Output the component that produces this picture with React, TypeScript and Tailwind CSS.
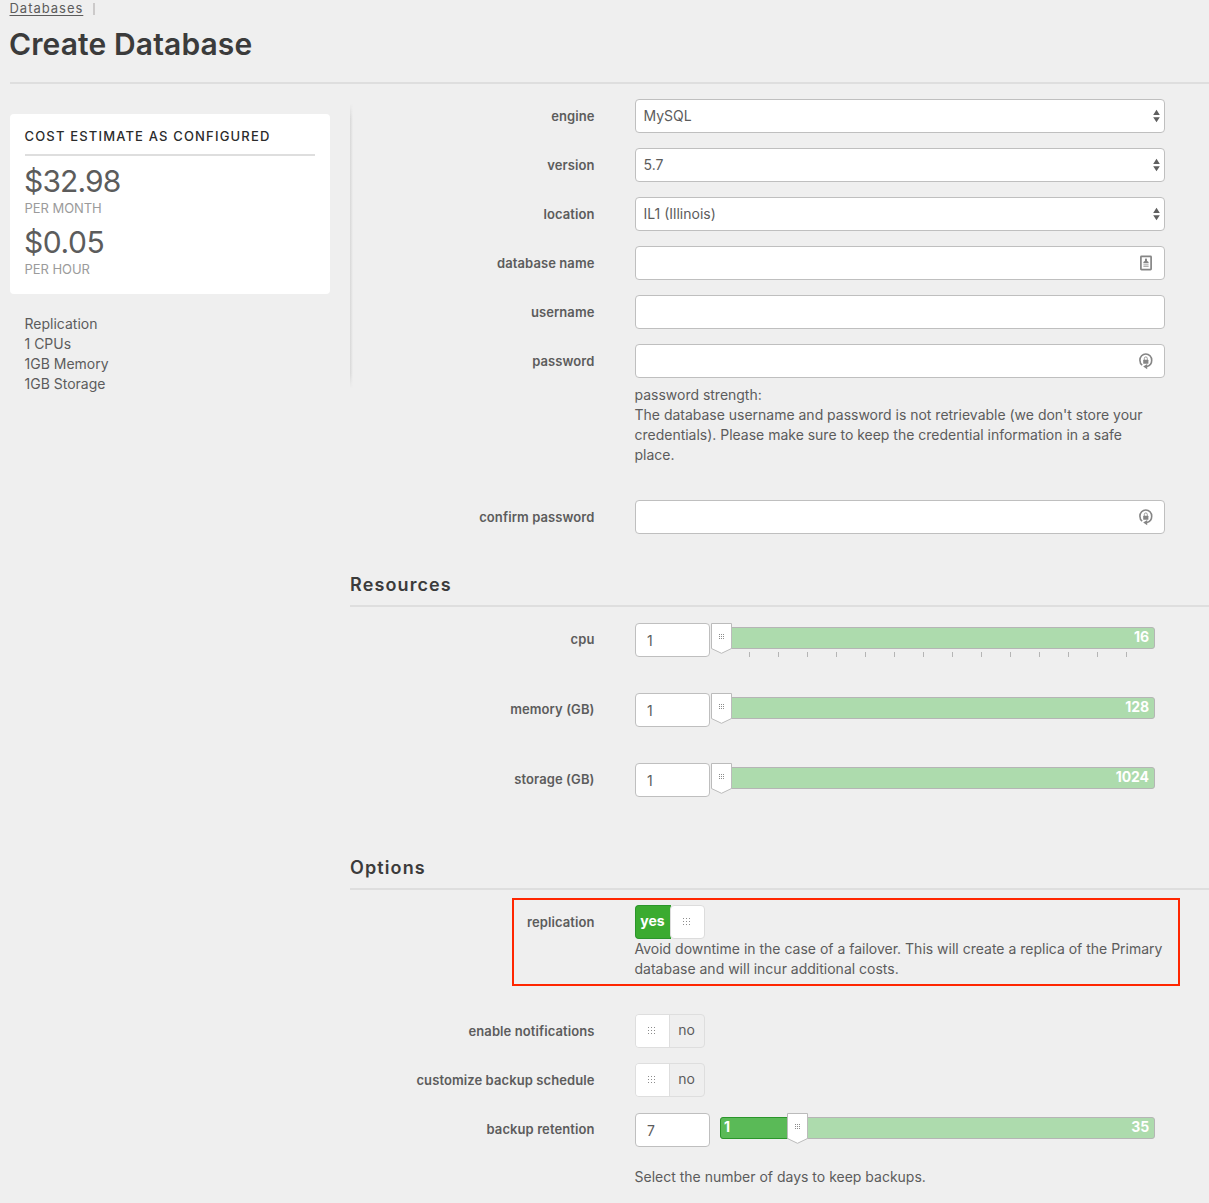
import type { ReactNode } from "react";

function Row({
  label, children, className = "", raised = false,
}: { label: string; children: ReactNode; className?: string; raised?: boolean }) {
  return (
    <div className={`flex items-start ${className}`}>
      <label
        className={`mr-[40.5px] w-[244.5px] text-right text-[13px] font-semibold tracking-[0.09px] ${raised ? "leading-[32px]" : "leading-[34px]"}`}
      >
        {label}
      </label>
      <div className="w-[530px]">{children}</div>
    </div>
  );
}

const fieldClass =
  "flex h-[34px] w-full items-center rounded-[4px] border border-[#bfbfbf] bg-white";

function SelectField({ value }: { value: string }) {
  return (
    <div className={`${fieldClass} justify-between pr-[4px] pl-[7.5px]`}>
      <span>{value}</span>
      <svg width="7" height="14" viewBox="0 0 7 14" fill="#5f5f5f">
        <path d="M3.5 .8 6.8 6H.2zM3.5 13.2 6.8 8.2H.2z" />
      </svg>
    </div>
  );
}

function TextField({ icon }: { icon?: ReactNode }) {
  return <div className={`${fieldClass} justify-end pr-[11px]`}>{icon}</div>;
}

function ContactIcon() {
  return (
    <svg width="14" height="16" viewBox="0 0 14 16" fill="none">
      <rect x="1.9" y="1.4" width="10.2" height="13.2" rx=".6" stroke="#858585" strokeWidth="1.7" />
      <path d="M7 3.5c.8 0 1.1.7 1 1.4-.1.6 0 1 .5 1.3.9.4 1.2.9 1.2 2.1H4.3c0-1.2.3-1.7 1.2-2.1.5-.3.6-.7.5-1.3-.1-.7.2-1.4 1-1.4z" fill="#858585" />
      <path d="M4.4 9.9h5.2M4.4 11.5h5.2" stroke="#b0b0b0" strokeWidth="1.2" />
    </svg>
  );
}

function GeneratePasswordIcon() {
  return (
    <svg width="14" height="18" viewBox="0 0 14 18" fill="none">
      <path d="M3.2 13.1C1.6 12 .9 10.3 .9 8.2.9 4.7 3.5 2 6.8 2s5.9 2.7 5.9 6.2c0 3-1.9 5.4-4.7 6.2" stroke="#858585" strokeWidth="1.6" />
      <path d="M4.2 14.6 8.2 12v5.2z" fill="#858585" />
      <rect x="4.2" y="7.7" width="5.2" height="4" rx=".5" fill="#858585" />
      <path d="M5.3 8V6.5a1.5 1.6 0 0 1 3 0V8" stroke="#9a9a9a" strokeWidth="1" />
    </svg>
  );
}

function Grip({ gap = 2 }: { gap?: number }) {
  const size = gap * 2 + 1;
  return (
    <svg width={size} height={size} viewBox={`0 0 ${size} ${size}`} fill="#8c8c8c" shapeRendering="crispEdges">
      {[0, 1, 2].flatMap((r) =>
        [0, 1, 2].map((c) => <rect key={`${r}${c}`} x={c * gap} y={r * gap} width="1" height="1" />)
      )}
    </svg>
  );
}

function Slider({
  value, max, min, offset = 0, ticks = 0,
}: { value: string; max: string; min?: string; offset?: number; ticks?: number }) {
  return (
    <div className="flex">
      <div className="flex h-[34px] w-[75px] items-center rounded-[4px] border border-[#bfbfbf] bg-white pt-[2px] pl-[11px]">
        {value}
      </div>
      <div className="relative mt-1 ml-[10px] h-[30px] w-[435px]">
        <div className="flex h-[22px] items-center justify-end rounded-[3px] border border-[#b5b5b5] bg-[#addbad] pr-[5px] pb-[2px] font-bold tracking-[-0.1px] text-white">
          {max}
        </div>
        {min && (
          <div
            className="absolute top-0 left-0 flex h-[22px] items-center rounded-l-[3px] border border-[#2b952b] bg-[#5aba57] pb-[2px] pl-[3px] font-bold text-white"
            style={{ width: offset + 2 }}
          >
            {min}
          </div>
        )}
        {ticks > 0 && (
          <div className="mt-[3px] flex h-[5px] justify-between pr-[28px] pl-[29px]">
            {Array.from({ length: ticks }, (_, i) => (
              <span key={i} className="w-px bg-[#b5b5b5]" />
            ))}
          </div>
        )}
        <div className="absolute -top-1 h-[31px] w-[21px]" style={{ left: offset - 9 }}>
          <svg width="21" height="31" viewBox="0 0 21 31">
            <path d="M.5 .5h20v25l-10 4.8L.5 25.5z" fill="#fff" stroke="#bbb" />
          </svg>
          <span className="absolute top-[11px] left-[8px] flex">
            <Grip />
          </span>
        </div>
      </div>
    </div>
  );
}

function Toggle({ on }: { on?: boolean }) {
  if (on) {
    return (
      <div className="flex h-[34px] w-[70px]">
        <div className="flex w-[36px] items-center justify-center rounded-l-[4px] border border-r-0 border-[#2b952b] bg-[#3bab30] pr-[2px] pb-[2px] font-bold text-white">
          yes
        </div>
        <div className="-ml-px flex w-[35px] items-center justify-center rounded-[4px] border border-[#dcdcdc] bg-white pr-[2px] pb-px">
          <Grip gap={3} />
        </div>
      </div>
    );
  }
  return (
    <div className="flex h-[34px] w-[70px] rounded-[4px] border border-[#dedede]">
      <div className="flex w-[34px] items-center justify-center rounded-l-[3px] border-r border-[#dedede] bg-white pr-[2px] pb-px">
        <Grip gap={3} />
      </div>
      <div className="flex flex-1 items-center justify-center pr-px pb-[2px]">no</div>
    </div>
  );
}

function SectionTitle({ children }: { children: ReactNode }) {
  return (
    <h2 className="h-[34px] border-b-2 border-[#dedede] text-[18px] leading-[24px] font-semibold tracking-[1.12px] text-[#3b3b3b]">
      {children}
    </h2>
  );
}

export default function App() {
  return (
    <div className="h-[1203px] w-[1209px] overflow-hidden bg-[#efefef] pl-[10px] font-['Inter',sans-serif] text-[14px] leading-5 text-[#5c5c5c]">
      <header className="h-[84px] border-b-2 border-[#dedede]">
        <nav className="-ml-[0.5px] flex h-[16px] items-center text-[13px] leading-[16px] tracking-[0.98px]">
          <a className="underline underline-offset-2">Databases</a>
          <span className="ml-[10px] h-[12px] w-[2px] translate-y-px bg-[#cccaca]" />
        </nav>
        <h1 className="mt-[10px] -ml-px text-[30px] leading-[36px] font-semibold tracking-[0.12px] text-[#3b3b3b]">Create Database</h1>
      </header>

      <div className="flex">
        <aside className="mt-[30px] w-[320px]">
          <div className="h-[180px] rounded-[4px] bg-white px-[15px] pt-[12px]">
            <h3 className="h-[30px] border-b-2 border-[#dedede] text-[13px] leading-[20px] font-medium tracking-[1.17px] whitespace-nowrap text-[#2b2b2b]">
              <span className="-ml-[0.5px]">COST ESTIMATE AS CONFIGURED</span>
            </h3>
            <p className="mt-[5px] -ml-px text-[30px] leading-[40px] tracking-[-0.85px]">$32.98</p>
            <p className="-mt-[3px] -ml-[0.5px] text-[13px] leading-[20px] tracking-[-0.05px] text-[#9b9b9b]">PER MONTH</p>
            <p className="mt-[4px] -ml-px text-[30px] leading-[40px] tracking-[-0.45px]">$0.05</p>
            <p className="-mt-[3px] -ml-[0.5px] text-[13px] leading-[20px] tracking-[-0.05px] text-[#9b9b9b]">PER HOUR</p>
          </div>
          <ul className="mt-[20px] pl-[14.5px]">
            <li>Replication</li>
            <li>1 CPUs</li>
            <li>1GB Memory</li>
            <li>1GB Storage</li>
          </ul>
        </aside>

        <div className="mt-[20px] ml-[20px] h-[284px] w-[3px] bg-linear-to-r from-[#d8d8d8] to-[#efefef] mask-y-from-95% mask-y-to-100%" />

        <main className="-ml-[3px] w-[859px] shrink-0 pt-[15px]">
          <div className="flex flex-col gap-[15px]">
            <Row label="engine"><SelectField value="MySQL" /></Row>
            <Row label="version"><SelectField value="5.7" /></Row>
            <Row label="location"><SelectField value="IL1 (Illinois)" /></Row>
            <Row label="database name"><TextField icon={<ContactIcon />} /></Row>
            <Row label="username"><TextField /></Row>
            <Row label="password">
              <TextField icon={<GeneratePasswordIcon />} />
              <p className="mt-[7px] -ml-[0.5px] tracking-[-0.01px]">
                password strength:
                <br />
                The database username and password is not retrievable (we don't store your
                <br />
                credentials). Please make sure to keep the credential information in a safe
                <br />
                place.
              </p>
            </Row>
          </div>
          <Row label="confirm password" className="mt-[35px]">
            <TextField icon={<GeneratePasswordIcon />} />
          </Row>

          <section className="mt-[39px]">
            <SectionTitle>Resources</SectionTitle>
            <div className="mt-[16px] flex flex-col gap-[36px]">
              <Row raised label="cpu"><Slider value="1" max="16" ticks={14} /></Row>
              <Row raised label="memory (GB)"><Slider value="1" max="128" /></Row>
              <Row raised label="storage (GB)"><Slider value="1" max="1024" /></Row>
            </div>
          </section>

          <section className="mt-[59px]">
            <SectionTitle>Options</SectionTitle>
            <div className="relative mt-[15px]">
              <Row label="replication">
                <Toggle on />
                <p className="-ml-[0.5px] whitespace-nowrap">
                  Avoid downtime in the case of a failover. This will create a replica of the Primary
                  <br />
                  database and will incur additional costs.
                </p>
              </Row>
              <div className="absolute -top-[7px] left-[162px] h-[88px] w-[668px] border-2 border-[#ff2600]" />
            </div>
            <Row label="enable notifications" className="mt-[35px]"><Toggle /></Row>
            <Row label="customize backup schedule" className="mt-[15px]"><Toggle /></Row>
            <Row raised label="backup retention" className="mt-[16px]">
              <Slider value="7" max="35" min="1" offset={76} />
              <p className="mt-[20px] -ml-[0.5px]">Select the number of days to keep backups.</p>
            </Row>
          </section>
        </main>
      </div>
    </div>
  );
}
